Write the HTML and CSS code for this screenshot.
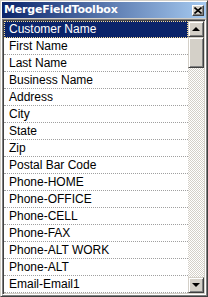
FILE: index.html
```html
<!DOCTYPE html>
<html lang="en">
<head>
    <meta charset="UTF-8">
    <title>MergeFieldToolbox</title>
    <link rel="stylesheet" href="styles.css">
</head>
<body>
    <div class="window">
        <div class="titlebar">
            <span class="title">MergeFieldToolbox</span>
            <button class="close-btn" title="Close">
                <svg width="8" height="7" viewBox="0 0 8 7">
                    <path d="M0.5 0.5 L7.5 6.5 M7.5 0.5 L0.5 6.5" stroke="#000" stroke-width="1.6" fill="none"/>
                </svg>
            </button>
        </div>

        <div class="listbox">
            <ul class="field-list">
                <li class="selected">Customer Name</li>
                <li>First Name</li>
                <li>Last Name</li>
                <li>Business Name</li>
                <li>Address</li>
                <li>City</li>
                <li>State</li>
                <li>Zip</li>
                <li>Postal Bar Code</li>
                <li>Phone-HOME</li>
                <li>Phone-OFFICE</li>
                <li>Phone-CELL</li>
                <li>Phone-FAX</li>
                <li>Phone-ALT WORK</li>
                <li>Phone-ALT</li>
                <li>Email-Email1</li>
            </ul>

            <!-- scrollbar drawn by hand, classic style -->
            <div class="scrollbar">
                <div class="sb-btn"><span class="arrow-up"></span></div>
                <div class="sb-track">
                    <div class="sb-thumb"></div>
                </div>
                <div class="sb-btn"><span class="arrow-down"></span></div>
            </div>
        </div>
    </div>
</body>
</html>
```

FILE: styles.css
```css
/* Classic grey tool window */
body {
    margin: 0;
    padding: 0;
    background: #d4d0c8;
}

.window {
    width: 208px;
    height: 297px;
    box-sizing: border-box;
    display: flex;
    flex-direction: column;
    padding: 1px;
    background: #d4d0c8;
    border: 1px solid;
    border-color: #d4d0c8 #404040 #404040 #d4d0c8;
    box-shadow: inset 1px 1px #fff, inset -1px -1px #808080;
    overflow: hidden;
}

.titlebar {
    flex: none;
    height: 16px;
    display: flex;
    align-items: center;
    padding-left: 2px;
    background: linear-gradient(to right, #0a246a, #a6caf0);
}

.title {
    color: #fff;
    font-family: "DejaVu Sans", Verdana, sans-serif;
    font-weight: bold;
    font-size: 11px;
    line-height: 16px;
    letter-spacing: -0.2px;
}

.close-btn {
    margin-left: auto;
    margin-right: 2px;
    width: 12px;
    height: 11px;
    padding: 0;
    display: flex;
    align-items: center;
    justify-content: center;
    background: #d4d0c8;
    border: 1px solid;
    border-color: #fff #404040 #404040 #fff;
    box-shadow: inset -1px -1px #808080;
}

.close-btn svg {
    display: block;
}

.listbox {
    flex: 1;
    display: flex;
    min-height: 0;
    margin-top: 1px;
    border: 1px solid;
    border-color: #808080 #fff #fff #808080;
    box-shadow: inset 1px 1px #404040, inset -1px -1px #d4d0c8;
    padding: 1px;
    overflow: hidden;
}

.field-list {
    flex: 1;
    margin: 0;
    padding: 0;
    list-style: none;
    background: #fff;
    overflow: hidden;
}

.field-list li {
    height: 17px;
    box-sizing: border-box;
    padding-left: 5px;
    border-bottom: 1px dotted #a0a0a0;
    font-family: "Liberation Sans", Arial, sans-serif;
    font-size: 12px;
    line-height: 16px;
    color: #000;
    white-space: nowrap;
}

.field-list li.selected {
    background: #0a246a;
    color: #fff;
    outline: 1px dotted #f5db95;
    outline-offset: -1px;
}

.scrollbar {
    flex: none;
    width: 16px;
    display: flex;
    flex-direction: column;
}

.sb-btn {
    flex: none;
    height: 16px;
    box-sizing: border-box;
    display: flex;
    align-items: center;
    justify-content: center;
    background: #d4d0c8;
    border: 1px solid;
    border-color: #d4d0c8 #404040 #404040 #d4d0c8;
    box-shadow: inset 1px 1px #fff, inset -1px -1px #808080;
}

.arrow-up,
.arrow-down {
    width: 0;
    height: 0;
    border-left: 4px solid transparent;
    border-right: 4px solid transparent;
}

.arrow-up {
    border-bottom: 4px solid #000;
    margin-top: -1px;
}

.arrow-down {
    border-top: 4px solid #000;
}

.sb-track {
    flex: 1;
    background: repeating-conic-gradient(#d4d0c8 0 25%, #fff 0 50%) 0 0 / 2px 2px;
}

.sb-thumb {
    height: 31px;
    box-sizing: border-box;
    background: #d4d0c8;
    border: 1px solid;
    border-color: #d4d0c8 #404040 #404040 #d4d0c8;
    box-shadow: inset 1px 1px #fff, inset -1px -1px #808080;
}
```
